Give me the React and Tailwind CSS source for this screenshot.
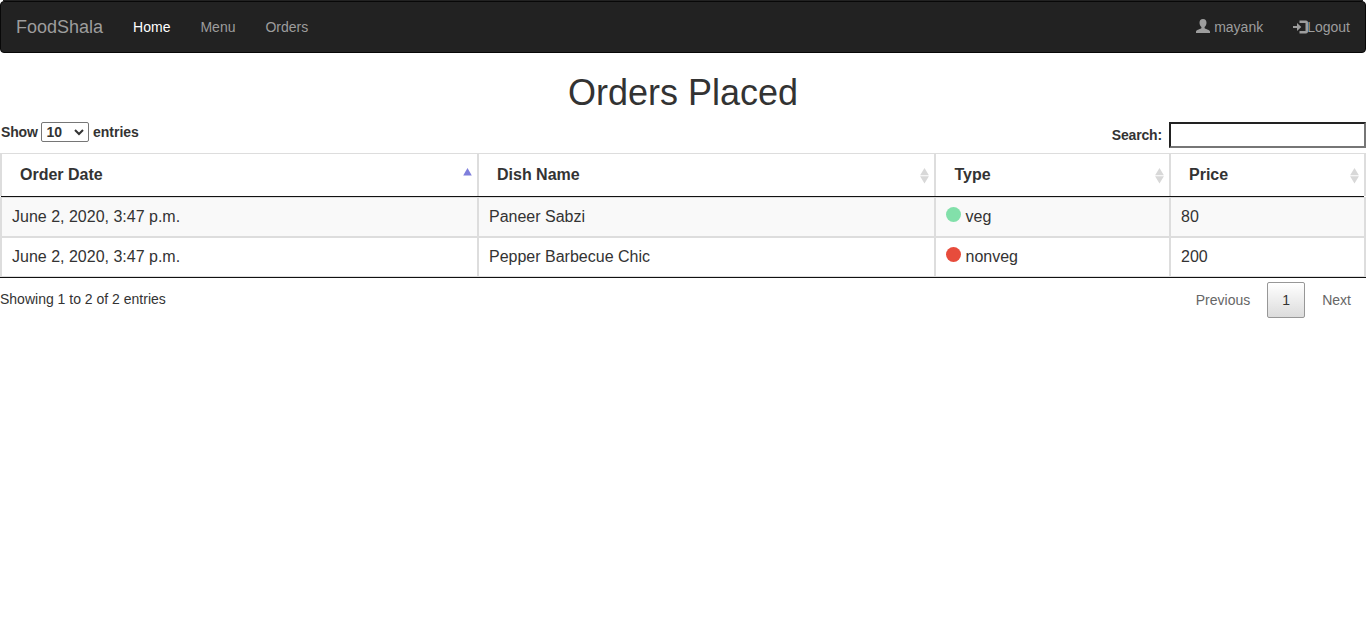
const UserIcon = () => (
  <svg className="mr-1 mb-[2px] h-[14px] w-[14px]" viewBox="0 0 14 14" fill="currentColor">
    <path d="M7 0C4.600 0 3.500 1.500 3.500 3.800c0 1.900.8 3.400 1.900 4.200v1.100C5 10.200.6 10.700 0 12.400V14h14v-1.600C13.400 10.700 9 10.200 8.600 9.100V8c1.100-.8 1.900-2.300 1.900-4.200C10.500 1.500 9.400 0 7 0z" />
  </svg>
);

const LoginIcon = () => (
  <svg className="-mr-[2px] mb-px h-[14px] w-[16px]" viewBox="0 0 16 14" fill="currentColor">
    <path d="M0 6h4V3L8.300 7 4 11V8H0z" />
    <path d="M6.500 .5h6.500Q15 .5 15 2.500v9Q15 13.500 13 13.500H6.500v-2.500H12.500V3H6.500z" />
  </svg>
);

const SortIcon = ({ active }) => (
  <svg className="absolute right-[5px] top-[14px] h-[16px] w-[9px]" viewBox="0 0 9 16">
    {active ? (
      <path d="M4.500 0L8.800 7.500H.2z" fill="#7f7fdc" />
    ) : (
      <path d="M4.500 0L8.900 7.200H.1zM.1 8.300h8.800L4.500 15.500z" fill="#d8d8d8" />
    )}
  </svg>
);

const columns = ["Order Date", "Dish Name", "Type", "Price"];
const orders = [
  { date: "June 2, 2020, 3:47 p.m.", dish: "Paneer Sabzi", type: "veg", price: 80 },
  { date: "June 2, 2020, 3:47 p.m.", dish: "Pepper Barbecue Chic", type: "nonveg", price: 200 },
];

const grid = "grid grid-cols-[477px_457px_235px_197px]";

export default function App() {
  return (
    <div className="w-[1366px] bg-white text-[14px] leading-5 text-[#333] font-['Liberation_Sans',Arial,sans-serif]">
      <div className="mx-[3px] h-px bg-[#222]" />
      <nav className="flex h-[52px] items-center justify-between rounded-[4px] border border-[#080808] bg-[#222] text-[#9d9d9d]">
        <div className="flex items-center">
          <a className="px-[15px] text-[18px]">FoodShala</a>
          <a className="px-[15px] text-white">Home</a>
          <a className="px-[15px]">Menu</a>
          <a className="px-[15px]">Orders</a>
        </div>
        <div className="flex items-center">
          <a className="flex items-center px-[15px]"><UserIcon />mayank</a>
          <a className="flex items-center px-[15px]"><LoginIcon />Logout</a>
        </div>
      </nav>
      <h1 className="h-[69px] pt-5 text-center text-[36px] font-normal leading-[39px]">Orders Placed</h1>
      <div className="flex h-[31px] items-start justify-between font-bold">
        <label className="flex">
          <span className="ml-px w-9 tracking-[-0.15px]">Show</span>
          <span className="mx-[4px] flex h-5 w-12 items-center justify-between rounded-[2px] border border-[#767676] pl-[4.500px] pr-[4px]">
            <span>10</span>
            <svg className="h-[7px] w-[10px]" viewBox="0 0 10 7" fill="none" stroke="#333" strokeWidth="2"><path d="M1 1l4 4 4-4" /></svg>
          </span>
          <span>entries</span>
        </label>
        <label className="flex items-center">
          <span className="mr-[7px] tracking-[-0.15px]">Search:</span>
          <input className="h-[26px] w-[197px] border-2 border-b-[#767676] border-l-[#222] border-r-[#767676] border-t-[#222] bg-white" />
        </label>
      </div>
      <div className="text-[16px] leading-[23px]">
        <div className={`${grid} h-[43px] border-t border-[#ddd]`}>
          {columns.map((c, i) => (
            <div key={c} className={`relative border-l-2 border-[#ddd] pt-[9px] font-bold last:border-r-2 ${c === "Type" ? "pl-[18.500px]" : "pl-[18px]"}`}>
              {c}
              <SortIcon active={i === 0} />
            </div>
          ))}
        </div>
        <div className="ml-px mr-[2px] h-px bg-[#111]" />
        {orders.map((o, i) => (
          <div
            key={o.dish}
            className={`${grid} h-[40px] border-y border-[#ddd] ${i === 0 ? "bg-[#f9f9f9]" : ""}`}
          >
            <div className="border-l-2 border-[#ddd] pl-[10px] pt-[7px]">{o.date}</div>
            <div className="border-l-2 border-[#ddd] pl-[10px] pt-[7px]">{o.dish}</div>
            <div className="flex border-l-2 border-[#ddd] pl-[10px] pt-[7px]">
              <span className={`mr-[4.500px] mt-[2px] h-[15px] w-[15px] rounded-full ${o.type === "veg" ? "bg-[#82e0aa]" : "bg-[#e74c3c]"}`} />
              {o.type}
            </div>
            <div className="border-l-2 border-r-2 border-[#ddd] pl-[10px] pt-[7px]">{o.price}</div>
          </div>
        ))}
        <div className="h-px bg-[#111]" />
      </div>
      <div className="flex justify-between">
        <div className="pt-[11px]">Showing 1 to 2 of 2 entries</div>
        <div className="flex items-center pt-[4px] text-[#666]">
          <span className="mr-[17px]">Previous</span>
          <span className="flex h-[36px] w-[38px] items-center justify-center rounded-[2px] border border-[#979797] bg-linear-to-b from-white to-[#dcdcdc] text-[#333]">1</span>
          <span className="ml-[17px] mr-[15px]">Next</span>
        </div>
      </div>
    </div>
  );
}
